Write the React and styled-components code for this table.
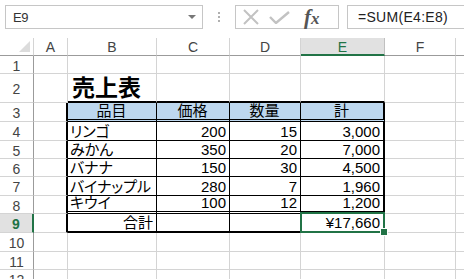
import React from "react";
import styled, { createGlobalStyle, css } from "styled-components";

const GlobalStyle = createGlobalStyle`
  html, body {
    margin: 0;
    padding: 0;
    background: #ffffff;
    overflow: hidden;
  }
  body {
    font-family: "Liberation Sans", "Noto Sans CJK JP", sans-serif;
  }
`;

const GREEN = "#217346";
const GRID = "#d4d4d4";
const HEAD_LINE = "#9b9b9b";

const COLS = ["A", "B", "C", "D", "E", "F", "G"];
const COL_WIDTHS = [34, 89, 73, 71, 84, 71, 71];
const ROW_HEIGHTS = [18, 29, 19, 19, 18, 18, 19, 18, 19, 19, 18, 19];

const items = [
  ["リンゴ", 200, 15, "3,000"],
  ["みかん", 350, 20, "7,000"],
  ["バナナ", 150, 30, "4,500"],
  ["バイナップル", 280, 7, "1,960"],
  ["キウイ", 100, 12, "1,200"],
];

// content of each cell, keyed "B4" etc.
const cells = {
  B2: { text: "売上表", title: true },
  B3: { text: "品目", align: "center", fill: "#bdd7ee" },
  C3: { text: "価格", align: "center", fill: "#bdd7ee" },
  D3: { text: "数量", align: "center", fill: "#bdd7ee" },
  E3: { text: "計", align: "center", fill: "#bdd7ee" },
  B9: { text: "合計", align: "right" },
  E9: { text: "¥17,660", align: "right", selected: true },
};
items.forEach(([name, price, qty, total], i) => {
  const r = i + 4;
  cells[`B${r}`] = { text: name };
  cells[`C${r}`] = { text: price, align: "right" };
  cells[`D${r}`] = { text: qty, align: "right" };
  cells[`E${r}`] = { text: total, align: "right" };
});

const inTable = (col, row) => "BCDE".includes(col) && row >= 3 && row <= 9;

const rightBorder = (col, row) => {
  if (col === "A" && row >= 3 && row <= 9) return "2px solid #000";
  if (inTable(col, row)) return col === "E" ? "2px solid #000" : "1px solid #000";
  return `1px solid ${GRID}`;
};

const bottomBorder = (col, row) => {
  if (row === 2 && "BCDE".includes(col)) return "2px solid #000";
  if (inTable(col, row)) {
    if (row === 3 || row === 8) return "3px double #000";
    if (row === 9) return "2px solid #000";
    return "1px solid #000";
  }
  return `1px solid ${GRID}`;
};

const App = () => (
  <Page>
    <GlobalStyle />
    <Toolbar>
      <NameBox>
        <NameText>E9</NameText>
        <DropArrow />
      </NameBox>
      <Grip>
        <i />
        <i />
        <i />
      </Grip>
      <IconBox>
        <svg width="18" height="16" viewBox="0 0 18 16">
          <path d="M2 1 L16 15 M16 1 L2 15" stroke="#c2c2c2" strokeWidth="2" fill="none" />
        </svg>
        <svg width="21" height="13" viewBox="0 0 21 13">
          <path d="M1 6 L7 12 L20 1" stroke="#c2c2c2" strokeWidth="2.4" fill="none" />
        </svg>
        <Fx>
          f<sub>x</sub>
        </Fx>
      </IconBox>
      <FormulaBox>=SUM(E4:E8)</FormulaBox>
    </Toolbar>

    <Sheet>
      <Corner>
        <Triangle />
      </Corner>
      {COLS.map((c) => (
        <ColHead key={c} $active={c === "E"}>
          {c}
        </ColHead>
      ))}
      {ROW_HEIGHTS.map((_, i) => {
        const row = i + 1;
        return (
          <React.Fragment key={row}>
            <RowHead $active={row === 9}>{row}</RowHead>
            {COLS.map((col) => {
              const c = cells[`${col}${row}`] || {};
              return (
                <Cell
                  key={col}
                  $right={rightBorder(col, row)}
                  $bottom={bottomBorder(col, row)}
                  $align={c.align}
                  $fill={c.fill}
                  $title={c.title}
                  $selected={c.selected}
                >
                  {c.text}
                  {c.selected && <FillHandle />}
                </Cell>
              );
            })}
          </React.Fragment>
        );
      })}
    </Sheet>
  </Page>
);

export default App;

const Page = styled.div`
  width: 464px;
  height: 279px;
  overflow: hidden;
  display: flex;
  flex-direction: column;
`;

const Toolbar = styled.div`
  height: 38px;
  flex: none;
  display: flex;
  align-items: flex-start;
  padding: 5px 0 0 5px;
  box-sizing: border-box;
`;

const NameBox = styled.div`
  width: 198px;
  height: 24px;
  box-sizing: border-box;
  border: 1px solid #c6c6c6;
  display: flex;
  align-items: center;
  justify-content: space-between;
  padding: 0 6px 0 7px;
`;

const NameText = styled.span`
  font-size: 13px;
  color: #333;
  letter-spacing: -0.5px;
`;

const DropArrow = styled.span`
  width: 0;
  height: 0;
  border-left: 4px solid transparent;
  border-right: 4px solid transparent;
  border-top: 4px solid #777;
`;

const Grip = styled.div`
  width: 32px;
  height: 24px;
  display: flex;
  flex-direction: column;
  align-items: center;
  justify-content: center;
  gap: 2px;

  i {
    width: 2px;
    height: 2px;
    background: #b0b0b0;
  }
`;

const IconBox = styled.div`
  width: 104px;
  height: 24px;
  box-sizing: border-box;
  border: 1px solid #c6c6c6;
  display: flex;
  align-items: center;
  padding: 0 0 0 6px;
  gap: 9px;

  svg {
    flex: none;
  }
`;

const Fx = styled.span`
  font-family: "Liberation Serif", serif;
  font-style: italic;
  font-weight: bold;
  font-size: 21px;
  color: #555;
  margin-left: 5px;
  line-height: 1;

  sub {
    font-size: 17px;
    vertical-align: 0;
  }
`;

const FormulaBox = styled.div`
  flex: 1;
  height: 24px;
  margin-left: 8px;
  box-sizing: border-box;
  border: 1px solid #c6c6c6;
  border-right: none;
  display: flex;
  align-items: center;
  padding-left: 10px;
  font-size: 14px;
  letter-spacing: 0.3px;
  color: #222;
`;

const Sheet = styled.div`
  flex: 1;
  display: grid;
  grid-template-columns: 34px ${COL_WIDTHS.map((w) => `${w}px`).join(" ")};
  grid-template-rows: 18px ${ROW_HEIGHTS.map((h) => `${h}px`).join(" ")};
  overflow: hidden;
`;

const Corner = styled.div`
  box-sizing: border-box;
  border-right: 1px solid ${GRID};
  border-bottom: 1px solid ${HEAD_LINE};
  display: flex;
  align-items: flex-end;
  justify-content: flex-end;
  padding: 0 3px 3px 0;
`;

const Triangle = styled.div`
  width: 0;
  height: 0;
  border-left: 11px solid transparent;
  border-bottom: 11px solid #dcdcdc;
`;

const ColHead = styled.div`
  box-sizing: border-box;
  border-right: 1px solid ${GRID};
  border-bottom: 1px solid ${HEAD_LINE};
  display: flex;
  align-items: center;
  justify-content: center;
  font-size: 14px;
  color: #444;
  padding-top: 1px;

  ${(p) =>
    p.$active &&
    css`
      background: #e1e1e1;
      color: ${GREEN};
      border-bottom: 2px solid ${GREEN};
      border-right-color: #c0c0c0;
    `}
`;

const RowHead = styled.div`
  box-sizing: border-box;
  border-right: 1px solid ${HEAD_LINE};
  border-bottom: 1px solid ${GRID};
  display: flex;
  align-items: center;
  justify-content: center;
  font-size: 14px;
  color: #444;
  padding-top: 2px;

  ${(p) =>
    p.$active &&
    css`
      background: #e1e1e1;
      color: ${GREEN};
      font-weight: bold;
      border-right: 2px solid ${GREEN};
    `}
`;

const Cell = styled.div`
  position: relative;
  box-sizing: border-box;
  border-right: ${(p) => p.$right};
  border-bottom: ${(p) => p.$bottom};
  background: ${(p) => p.$fill || "transparent"};
  display: flex;
  align-items: flex-end;
  justify-content: ${(p) =>
    p.$align === "right" ? "flex-end" : p.$align === "center" ? "center" : "flex-start"};
  padding: 0 3px 0 2px;
  font-size: 15px;
  line-height: 17px;
  font-feature-settings: "palt";
  color: #000;
  white-space: nowrap;

  ${(p) =>
    p.$title &&
    css`
      overflow: visible;
      font-size: 23px;
      font-weight: bold;
      line-height: 26px;
      padding-left: 4px;
      z-index: 1;
    `}

  ${(p) =>
    p.$selected &&
    css`
      &::after {
        content: "";
        position: absolute;
        top: -2px;
        left: -1px;
        right: -2px;
        bottom: -2px;
        border: 2px solid ${GREEN};
        pointer-events: none;
      }
    `}
`;

const FillHandle = styled.span`
  position: absolute;
  right: -5px;
  bottom: -5px;
  width: 6px;
  height: 6px;
  background: ${GREEN};
  border: 1px solid #fff;
  z-index: 2;
`;
